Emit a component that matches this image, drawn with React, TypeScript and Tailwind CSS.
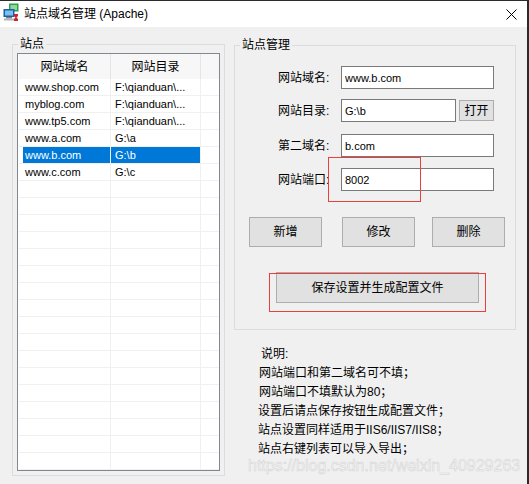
import React from "react";

const sites: [string, string][] = [
  ["www.shop.com", "F:\\qianduan\\..."],
  ["myblog.com", "F:\\qianduan\\..."],
  ["www.tp5.com", "F:\\qianduan\\..."],
  ["www.a.com", "G:\\a"],
  ["www.b.com", "G:\\b"],
  ["www.c.com", "G:\\c"],
];
const emptyRows = Array.from({ length: 17 }, (_, i) => i);

function AppIcon() {
  return (
    <svg width="16" height="18" viewBox="0 0 16 18" className="-mt-[4px] shrink-0">
      <rect x="6" y="0.5" width="9.5" height="8" fill="#2e9e4f" />
      <rect x="7.5" y="2" width="6.5" height="5" fill="#8fd79b" />
      <rect x="0.5" y="6" width="11" height="8" fill="#1c5fa8" />
      <rect x="2" y="7.5" width="8" height="5" fill="#7cc0f2" />
      <rect x="3" y="14" width="6" height="1.5" fill="#7d7d7d" />
      <rect x="1" y="15.5" width="10" height="2" fill="#b4b4b4" />
      <path d="M11 11h4v2l-1.5 1.5L15 16v2h-4v-2l1.5-1.5L11 13z" fill="#c8282d" />
    </svg>
  );
}

function Field({ label, value, className = "" }: { label: string; value: string; className?: string }) {
  return (
    <div className={`flex h-[23px] items-center pl-[43px] ${className}`}>
      <span className="w-[63px] leading-[16px]">{label}</span>
      <input
        readOnly
        value={value}
        className="h-[23px] w-[153px] border border-[#7a7a7a] bg-white px-[3px] text-[11px] text-black outline-none"
      />
    </div>
  );
}

function Btn({ text, className = "" }: { text: string; className?: string }) {
  return (
    <button className={`h-[30px] w-[73px] border border-[#adadad] bg-[#e1e1e1] leading-[16px] ${className}`}>
      {text}
    </button>
  );
}

export default function App() {
  return (
    <div className="relative h-[484px] w-[529px] overflow-hidden border-t border-r-2 border-[#2b2b2b] bg-[#f0f0f0] font-['Liberation_Sans','Noto_Sans_CJK_SC',sans-serif] text-[12px] text-black">
      {/* Title bar */}
      <div className="flex h-[26px] items-center bg-white pl-[3px]">
        <AppIcon />
        <span className="ml-[5px] leading-[16px]">站点域名管理 (Apache)</span>
        <svg width="11" height="11" viewBox="0 0 11 11" className="ml-auto mr-[10px]">
          <path d="M0.5 0.5L10.5 10.5M10.5 0.5L0.5 10.5" stroke="#000" strokeWidth="1" />
        </svg>
      </div>

      <div className="flex pl-[12px] pt-[9px]">
        {/* Sites list */}
        <fieldset className="m-0 h-[440px] w-[213px] border border-[#dcdcdc] px-[4px] pb-[4px]">
          <legend className="ml-[1px] px-[2px] leading-[16px]">站点</legend>
          <div className="mt-[1px] h-[418px] overflow-hidden border border-[#828790] bg-white pl-[1px]">
            <div className="flex h-[25px] bg-[#f7f7f7] leading-[16px]">
              <div className="flex w-[92px] items-center justify-center border-r border-[#e5e5e5]">网站域名</div>
              <div className="flex w-[90px] items-center justify-center border-r border-[#e5e5e5]">网站目录</div>
              <div className="flex-1" />
            </div>
            {sites.map(([d, p]) => {
              const sel = d === "www.b.com";
              return (
                <div key={d} className="flex h-[17px] border-b border-[#f0f0f0] text-[11px] leading-[16px]">
                  <div className="w-[92px] border-r border-[#f0f0f0]">
                    <div className={`ml-[4px] h-full pl-[2px] ${sel ? "bg-[#0078d7] text-white" : ""}`}>{d}</div>
                  </div>
                  <div className={`w-[90px] border-r border-[#f0f0f0] pl-[4px] ${sel ? "bg-[#0078d7] text-white" : ""}`}>{p}</div>
                  <div className="flex-1" />
                </div>
              );
            })}
            {emptyRows.map((i) => (
              <div key={i} className="flex h-[17px] border-b border-[#f0f0f0]">
                <div className="w-[92px] border-r border-[#f0f0f0]" />
                <div className="w-[90px] border-r border-[#f0f0f0]" />
                <div className="flex-1" />
              </div>
            ))}
          </div>
        </fieldset>

        {/* Right column */}
        <div className="ml-[9px] mt-[1px] flex flex-col">
          <fieldset className="m-0 h-[293px] w-[282px] border border-[#dcdcdc] p-0">
            <legend className="ml-[5px] px-[2px] leading-[16px]">站点管理</legend>
            <Field label="网站域名:" value="www.b.com" className="mt-[13px]" />
            <div className="mt-[10px] flex h-[23px] items-center pl-[43px]">
              <span className="w-[63px] leading-[16px]">网站目录:</span>
              <input
                readOnly
                value="G:\b"
                className="h-[23px] w-[115px] border border-[#7a7a7a] bg-white px-[3px] text-[11px] text-black outline-none"
              />
              <button className="ml-[3px] h-[21px] w-[35px] border border-[#adadad] bg-[#e1e1e1] leading-[16px]">打开</button>
            </div>
            <Field label="第二域名:" value="b.com" className="mt-[12px]" />
            <Field label="网站端口:" value="8002" className="mt-[11px]" />
            <div className="mt-[26px] flex pl-[14px]">
              <Btn text="新增" />
              <Btn text="修改" className="ml-[20px]" />
              <Btn text="删除" className="ml-[17px]" />
            </div>
            <div className="mt-[25px] pl-[41px]">
              <button className="h-[31px] w-[203px] border border-[#adadad] bg-[#e1e1e1] leading-[16px]">
                保存设置并生成配置文件
              </button>
            </div>
          </fieldset>

          <div className="ml-[24px] mt-[15px] leading-[19px]">
            <p className="ml-[3px]">说明:</p>
            <p className="ml-[1px]">网站端口和第二域名可不填；</p>
            <p className="ml-[1px]">网站端口不填默认为80；</p>
            <p>设置后请点保存按钮生成配置文件；</p>
            <p>站点设置同样适用于IIS6/IIS7/IIS8；</p>
            <p>站点右键列表可以导入导出；</p>
          </div>
        </div>
      </div>

      {/* red annotation frames drawn over the form */}
      <div className="absolute left-[328px] top-[156px] h-[45px] w-[93px] border border-[#e8403c]" />
      <div className="absolute left-[269px] top-[272px] h-[39px] w-[217px] border border-[#e8403c]" />

      {/* watermark */}
      <div className="absolute left-[248px] top-[455px] text-[16px] leading-[20px] text-[#f5f5f5] [-webkit-text-stroke:0.5px_#d2d2d2]">
        https://blog.csdn.net/weixin_40929263
      </div>
    </div>
  );
}
